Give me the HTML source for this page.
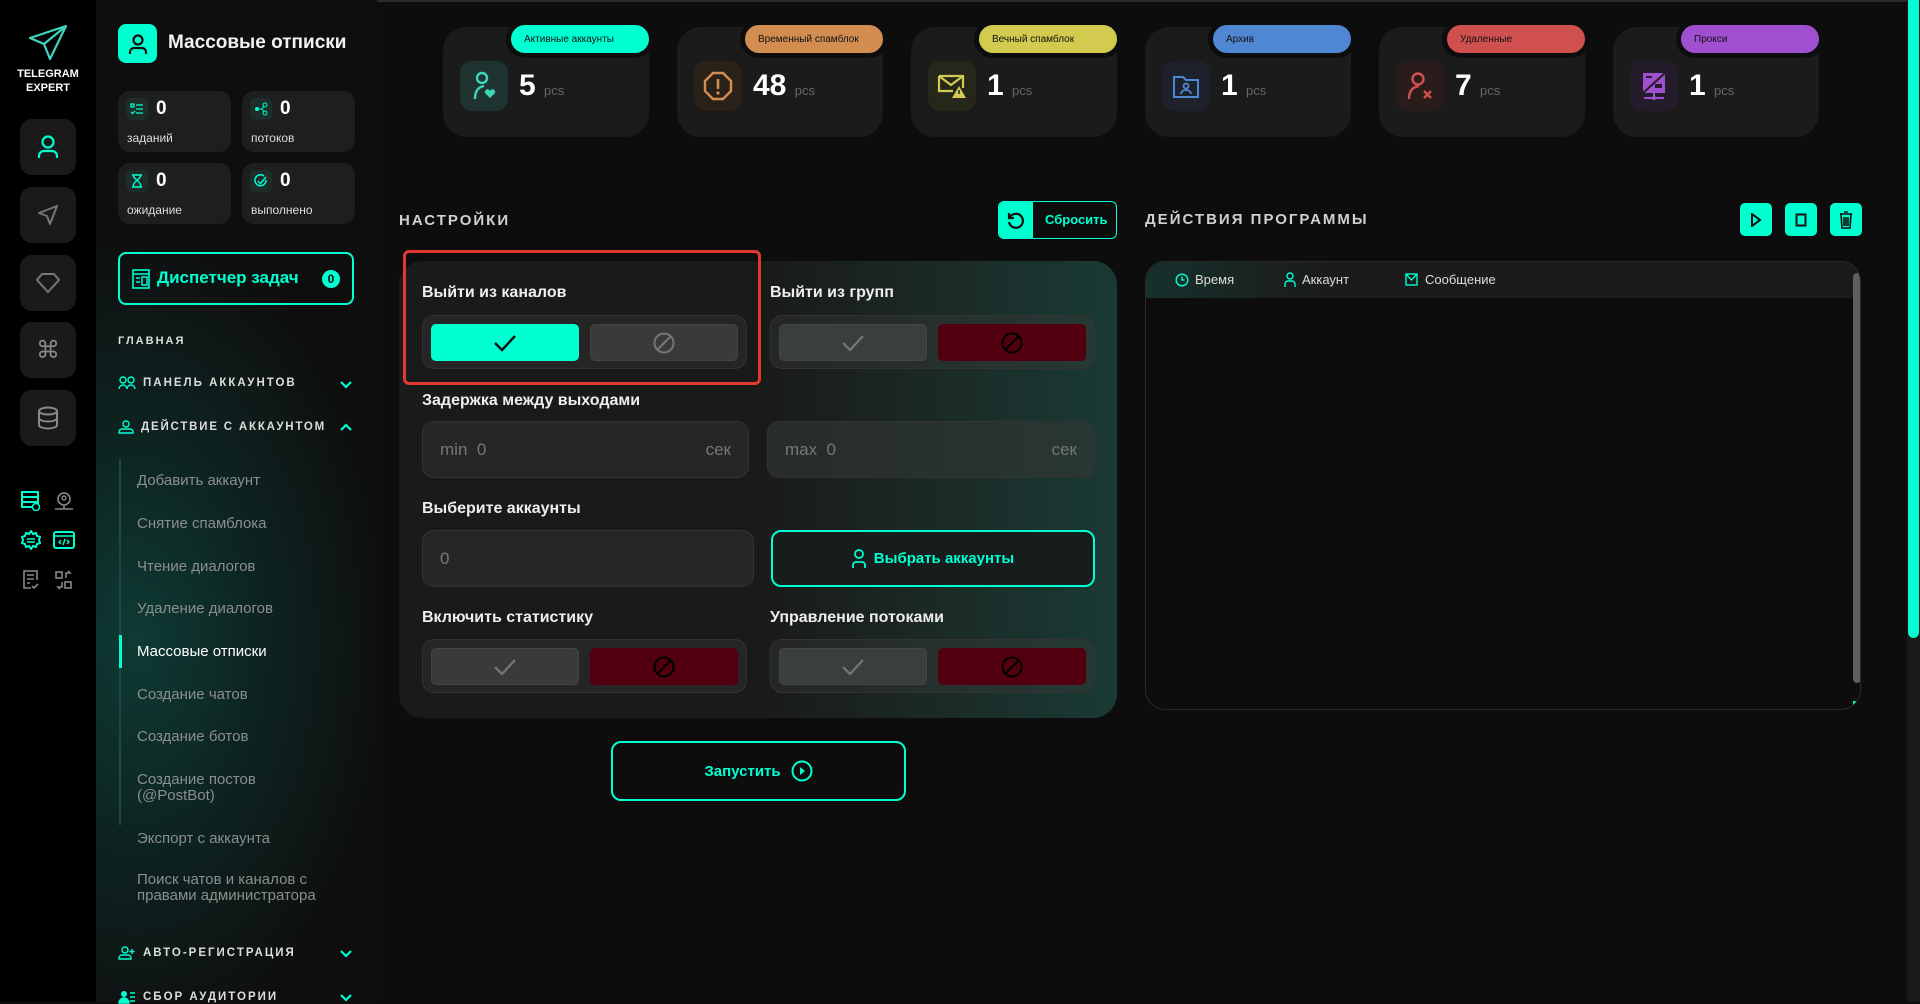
<!DOCTYPE html>
<html><head><meta charset="utf-8">
<style>
*{box-sizing:border-box;margin:0;padding:0}
body{width:1920px;height:1002px;overflow:hidden;background:#0d0d0d;font-family:"Liberation Sans",sans-serif;color:#fff;position:relative}
.abs{position:absolute}
.rail{left:0;top:0;width:96px;height:1002px;background:#000}
.rbtn{position:absolute;left:20px;width:56px;height:56px;border-radius:12px;background:#1a1a1a;display:flex;align-items:center;justify-content:center}
.side{left:96px;top:0;width:281px;height:1002px;background:radial-gradient(ellipse 260px 420px at 40px 640px,#0f3a34 0%,#0d2522 45%,#0e0e0e 100%)}
.sbox{position:absolute;width:113px;height:61px;border-radius:12px;background:#1d1f1f}
.sbox .ic{position:absolute;left:8px;top:7px;width:22px;height:22px;border-radius:5px;background:#1f2d2a;display:flex;align-items:center;justify-content:center}
.sbox .n{position:absolute;left:38px;top:7px;font-size:19px;font-weight:bold}
.sbox .l{position:absolute;left:9px;top:40px;font-size:12px;color:#ddd}
.sec{position:absolute;left:118px;font-size:11.5px;font-weight:bold;letter-spacing:2px;color:#ddd;display:flex;align-items:center;gap:7px}
.chev{position:absolute;left:340px;width:12px;height:12px}
.sub{position:absolute;left:137px;font-size:15px;color:#8a8f8e;line-height:16px}
.card{position:absolute;top:27px;width:206px;height:110px;border-radius:24px;background:#1b1b1b}
.badge{position:absolute;top:-7px;right:-5px;width:148px;height:38px;border-radius:19px;border:5px solid #0d0d0d;font-size:10px;color:#111;padding:9px 0 0 13px}
.card .ib{position:absolute;left:17px;top:34px;width:48px;height:50px;border-radius:12px;display:flex;align-items:center;justify-content:center}
.card .num{position:absolute;left:76px;top:42px;font-size:30px;font-weight:bold;font-family:"Liberation Sans Narrow","Liberation Sans",sans-serif}
.card .num span{font-size:13px;font-weight:normal;color:#666}
.h2{position:absolute;font-size:15px;font-weight:bold;letter-spacing:2px;color:#d0d0d0}
.lbl{position:absolute;font-size:16px;font-weight:bold;color:#eee}
.tg{position:absolute;width:325px;height:54px;border-radius:12px;background:rgba(60,60,60,.35);border:1px solid #333}
.tb{position:absolute;top:8px;width:148px;height:37px;border-radius:5px;display:flex;align-items:center;justify-content:center}
.inp{position:absolute;height:57px;border-radius:12px;background:#262626;border:1px solid #333;font-size:17px;color:#777}
.tbtn{position:absolute;top:203px;width:32px;height:33px;border-radius:5px;background:#00ffd1;display:flex;align-items:center;justify-content:center}
</style></head><body>

<div class="abs" style="left:96px;top:0;width:1824px;height:2px;background:#2a2a2a"></div>

<div class="abs rail">
  <svg class="abs" style="left:28px;top:24px" width="40" height="38" viewBox="0 0 40 38"><path d="M38 2 L2 14 L16 20 L22 35 Z M16 20 L38 2" fill="none" stroke="#3fd6c0" stroke-width="2.2" stroke-linejoin="round"/></svg>
  <div class="abs" style="left:0;top:67px;width:96px;text-align:center;font-size:11px;font-weight:bold;line-height:14px;color:#fff">TELEGRAM<br>EXPERT</div>
  <div class="rbtn" style="top:119px"><svg width="24" height="26" viewBox="0 0 24 26"><circle cx="12" cy="8" r="5.5" fill="none" stroke="#00ffd1" stroke-width="2.2"/><path d="M3 24v-2a5 5 0 0 1 5-5h8a5 5 0 0 1 5 5v2" fill="none" stroke="#00ffd1" stroke-width="2.2"/></svg></div>
  <div class="rbtn" style="top:187px"><svg width="24" height="24" viewBox="0 0 24 24"><path d="M21 3L3 10l8 3 3 8z" fill="none" stroke="#777" stroke-width="2" stroke-linejoin="round"/></svg></div>
  <div class="rbtn" style="top:255px"><svg width="26" height="22" viewBox="0 0 26 22"><path d="M7 2h12l5 6-11 12L2 8z" fill="none" stroke="#777" stroke-width="2" stroke-linejoin="round"/></svg></div>
  <div class="rbtn" style="top:322px;font-size:24px;color:#888">⌘</div>
  <div class="rbtn" style="top:390px"><svg width="22" height="24" viewBox="0 0 22 24"><ellipse cx="11" cy="5" rx="9" ry="3.5" fill="none" stroke="#888" stroke-width="2"/><path d="M2 5v14c0 2 4 3.5 9 3.5s9-1.5 9-3.5V5M2 12c0 2 4 3.5 9 3.5s9-1.5 9-3.5" fill="none" stroke="#888" stroke-width="2"/></svg></div>
  <svg class="abs" style="left:21px;top:491px" width="20" height="20" viewBox="0 0 20 20"><rect x="1" y="1" width="16" height="15" fill="none" stroke="#00ffd1" stroke-width="2"/><path d="M1 6h16M1 11h16" stroke="#00ffd1" stroke-width="2"/><circle cx="15" cy="16" r="3.5" fill="#000" stroke="#00ffd1" stroke-width="1.5"/></svg>
  <svg class="abs" style="left:54px;top:491px" width="20" height="20" viewBox="0 0 20 20"><circle cx="10" cy="8" r="6" fill="none" stroke="#888" stroke-width="1.6"/><circle cx="10" cy="7" r="2" fill="none" stroke="#888" stroke-width="1.4"/><path d="M1 18h18M10 14v4" stroke="#888" stroke-width="1.6"/></svg>
  <svg class="abs" style="left:21px;top:530px" width="20" height="20" viewBox="0 0 20 20"><path d="M10 1l2 3 3-1 1 3 3 1-1 3 1 3-3 1-1 3-3-1-2 3-2-3-3 1-1-3-3-1 1-3-1-3 3-1 1-3 3 1z" fill="none" stroke="#00ffd1" stroke-width="2"/><path d="M6 9h8M6 12h8" stroke="#00ffd1" stroke-width="1.6"/></svg>
  <svg class="abs" style="left:53px;top:531px" width="22" height="18" viewBox="0 0 22 18"><rect x="1" y="1" width="20" height="16" rx="2" fill="none" stroke="#00ffd1" stroke-width="2"/><path d="M1 5h20M8 9l-2 2 2 2M14 9l2 2-2 2M12 8l-2 6" stroke="#00ffd1" stroke-width="1.4" fill="none"/></svg>
  <svg class="abs" style="left:22px;top:570px" width="18" height="20" viewBox="0 0 18 20"><path d="M15 10V1H2v17h7M5 5h7M5 9h7M5 13h3M10 16l2 2 4-4" fill="none" stroke="#888" stroke-width="1.6"/></svg>
  <svg class="abs" style="left:55px;top:570px" width="18" height="20" viewBox="0 0 18 20"><rect x="1" y="2" width="6" height="6" fill="none" stroke="#888" stroke-width="1.6"/><rect x="10" y="12" width="6" height="6" fill="none" stroke="#888" stroke-width="1.6"/><path d="M11 8V3h4l-2-2M7 12v5H3l2 2" fill="none" stroke="#888" stroke-width="1.6"/></svg>
</div>

<div class="abs side"></div>
<div class="abs" style="left:118px;top:24px;width:39px;height:39px;border-radius:8px;background:#00ffd1;display:flex;align-items:center;justify-content:center"><svg width="20" height="22" viewBox="0 0 20 22"><circle cx="10" cy="7" r="4.5" fill="none" stroke="#111" stroke-width="2.2"/><path d="M2 21v-2a4 4 0 0 1 4-4h8a4 4 0 0 1 4 4v2" fill="none" stroke="#111" stroke-width="2.2"/></svg></div>
<div class="abs" style="left:168px;top:32px;font-size:19px;font-weight:bold;color:#f2f2f2">Массовые отписки</div>

<div class="sbox" style="left:118px;top:91px"><div class="ic"><svg width="14" height="12" viewBox="0 0 14 12"><path d="M1 1h3v3H1zM6 2h7M6 6h7M6 10h7M1 9l1.5 1.5L5 8" fill="none" stroke="#00ffd1" stroke-width="1.3"/></svg></div><div class="n">0</div><div class="l">заданий</div></div>
<div class="sbox" style="left:242px;top:91px"><div class="ic"><svg width="14" height="14" viewBox="0 0 14 14"><circle cx="3" cy="7" r="2" fill="#00ffd1"/><circle cx="11" cy="3" r="2" fill="none" stroke="#00ffd1"/><circle cx="11" cy="11" r="2" fill="none" stroke="#00ffd1"/><path d="M5 7h3l2-3M8 7l2 3" stroke="#00ffd1" fill="none"/></svg></div><div class="n">0</div><div class="l">потоков</div></div>
<div class="sbox" style="left:118px;top:163px"><div class="ic"><svg width="12" height="14" viewBox="0 0 12 14"><path d="M1 1h10M1 13h10M2 1c0 4 8 6 8 12M10 1c0 4-8 6-8 12" fill="none" stroke="#00ffd1" stroke-width="1.4"/></svg></div><div class="n">0</div><div class="l">ожидание</div></div>
<div class="sbox" style="left:242px;top:163px"><div class="ic"><svg width="14" height="14" viewBox="0 0 14 14"><path d="M12 6a5.5 5.5 0 1 1-2-4" fill="none" stroke="#00ffd1" stroke-width="1.5"/><path d="M4 7l2.5 2.5L12 3" fill="none" stroke="#00ffd1" stroke-width="1.5"/></svg></div><div class="n">0</div><div class="l">выполнено</div></div>

<div class="abs" style="left:118px;top:252px;width:236px;height:53px;border:2px solid #00ffd1;border-radius:8px"></div>
<svg class="abs" style="left:132px;top:269px" width="18" height="20" viewBox="0 0 18 20"><rect x="1" y="1" width="16" height="18" fill="none" stroke="#00ffd1" stroke-width="1.6"/><path d="M1 5h16M4 9h4M4 13h4M10 8h5v8h-5z" stroke="#00ffd1" stroke-width="1.4" fill="none"/></svg>
<div class="abs" style="left:157px;top:268px;font-size:17px;font-weight:bold;color:#00ffd1">Диспетчер задач</div>
<div class="abs" style="left:322px;top:270px;width:18px;height:18px;border-radius:9px;background:#00ffd1;color:#111;font-size:12px;font-weight:bold;text-align:center;line-height:18px">0</div>

<div class="sec" style="top:335px;font-size:11px">ГЛАВНАЯ</div>
<div class="sec" style="top:376px"><svg width="18" height="14" viewBox="0 0 18 14"><circle cx="5" cy="4" r="3" fill="none" stroke="#00ffd1" stroke-width="1.4"/><circle cx="13" cy="4" r="3" fill="none" stroke="#00ffd1" stroke-width="1.4"/><path d="M1 13a4 4 0 0 1 8 0M9 13a4 4 0 0 1 8 0" fill="none" stroke="#00ffd1" stroke-width="1.4"/></svg>ПАНЕЛЬ АККАУНТОВ</div>
<svg class="chev" style="top:378px" viewBox="0 0 12 12"><path d="M1 4l5 5 5-5" fill="none" stroke="#00ffd1" stroke-width="2.2"/></svg>
<div class="sec" style="top:420px;letter-spacing:1.8px"><svg width="16" height="14" viewBox="0 0 16 14"><circle cx="8" cy="4" r="3" fill="none" stroke="#00ffd1" stroke-width="1.4"/><path d="M1 13v-1a3 3 0 0 1 3-3h8a3 3 0 0 1 3 3v1z" fill="none" stroke="#00ffd1" stroke-width="1.4"/></svg>ДЕЙСТВИЕ С АККАУНТОМ</div>
<svg class="chev" style="top:421px" viewBox="0 0 12 12"><path d="M1 9l5-5 5 5" fill="none" stroke="#00ffd1" stroke-width="2.2"/></svg>

<div class="abs" style="left:119px;top:459px;width:2px;height:366px;background:#1d4a43"></div>
<div class="abs" style="left:119px;top:635px;width:3px;height:33px;background:#00ffd1"></div>
<div class="sub" style="top:473px">Добавить аккаунт</div>
<div class="sub" style="top:516px">Снятие спамблока</div>
<div class="sub" style="top:559px">Чтение диалогов</div>
<div class="sub" style="top:601px">Удаление диалогов</div>
<div class="sub" style="top:644px;color:#fff">Массовые отписки</div>
<div class="sub" style="top:687px">Создание чатов</div>
<div class="sub" style="top:729px">Создание ботов</div>
<div class="sub" style="top:772px">Создание постов<br>(@PostBot)</div>
<div class="sub" style="top:831px">Экспорт с аккаунта</div>
<div class="sub" style="top:872px">Поиск чатов и каналов с<br>правами администратора</div>

<div class="sec" style="top:946px"><svg width="18" height="14" viewBox="0 0 18 14"><circle cx="7" cy="4" r="3" fill="none" stroke="#00ffd1" stroke-width="1.4"/><path d="M1 13v-1a3 3 0 0 1 3-3h6a3 3 0 0 1 3 3v1zM14 3v5M11.5 5.5h5" fill="none" stroke="#00ffd1" stroke-width="1.4"/></svg>АВТО-РЕГИСТРАЦИЯ</div>
<svg class="chev" style="top:947px" viewBox="0 0 12 12"><path d="M1 4l5 5 5-5" fill="none" stroke="#00ffd1" stroke-width="2.2"/></svg>
<div class="sec" style="top:990px"><svg width="18" height="14" viewBox="0 0 18 14"><circle cx="6" cy="4" r="3" fill="#00ffd1"/><path d="M1 13a5 5 0 0 1 10 0zM12 3h5M12 7h5M12 11h5" stroke="#00ffd1" fill="#00ffd1" stroke-width="1.4"/></svg>СБОР АУДИТОРИИ</div>
<svg class="chev" style="top:991px" viewBox="0 0 12 12"><path d="M1 4l5 5 5-5" fill="none" stroke="#00ffd1" stroke-width="2.2"/></svg>

<div class="card" style="left:443px"><div class="badge" style="background:#00ffd1">Активные аккаунты</div>
 <div class="ib" style="background:#1f3330"><svg width="24" height="30" viewBox="0 0 24 30"><circle cx="10" cy="7" r="5" fill="none" stroke="#3fd6b8" stroke-width="2.4"/><path d="M3 28c0-8 3-12 9-13" fill="none" stroke="#3fd6b8" stroke-width="2.4"/><path d="M18 27l-5-5a2.5 2.5 0 0 1 5-2 2.5 2.5 0 0 1 5 2z" fill="#3fd6b8"/></svg></div>
 <div class="num">5 <span>pcs</span></div></div>
<div class="card" style="left:677px"><div class="badge" style="background:#d38d50">Временный спамблок</div>
 <div class="ib" style="background:#2a2218"><svg width="30" height="30" viewBox="0 0 30 30"><path d="M10 2h10l8 8v10l-8 8H10l-8-8V10z" fill="none" stroke="#d38d50" stroke-width="2.4"/><path d="M15 8v10" stroke="#d38d50" stroke-width="2.6"/><circle cx="15" cy="22" r="1.6" fill="#d38d50"/></svg></div>
 <div class="num">48 <span>pcs</span></div></div>
<div class="card" style="left:911px"><div class="badge" style="background:#d2cb4f">Вечный спамблок</div>
 <div class="ib" style="background:#26261a"><svg width="30" height="26" viewBox="0 0 30 26"><path d="M2 3h24v12M2 3v15h14M2 3l12 9 12-9" fill="none" stroke="#d2cb4f" stroke-width="2.2"/><path d="M22 13l7 12H15z" fill="#d2cb4f"/><path d="M22 17v4" stroke="#222" stroke-width="1.5"/></svg></div>
 <div class="num">1 <span>pcs</span></div></div>
<div class="card" style="left:1145px"><div class="badge" style="background:#5087d3">Архив</div>
 <div class="ib" style="background:#1c212b"><svg width="28" height="26" viewBox="0 0 28 26"><path d="M2 4h9l3 3h12v17H2z" fill="none" stroke="#5087d3" stroke-width="2"/><circle cx="14" cy="13" r="2.5" fill="none" stroke="#5087d3" stroke-width="1.8"/><path d="M9 21a5 4 0 0 1 10 0" fill="none" stroke="#5087d3" stroke-width="1.8"/></svg></div>
 <div class="num">1 <span>pcs</span></div></div>
<div class="card" style="left:1379px"><div class="badge" style="background:#d05050">Удаленные</div>
 <div class="ib" style="background:#2b1c1c"><svg width="28" height="30" viewBox="0 0 28 30"><circle cx="12" cy="8" r="5.5" fill="none" stroke="#d05050" stroke-width="2.4"/><path d="M3 28c0-7 3-12 10-13" fill="none" stroke="#d05050" stroke-width="2.4"/><path d="M18 20l7 7M25 20l-7 7" stroke="#d05050" stroke-width="2.4"/></svg></div>
 <div class="num">7 <span>pcs</span></div></div>
<div class="card" style="left:1613px"><div class="badge" style="background:#9f4fd0">Прокси</div>
 <div class="ib" style="background:#251c2b"><svg width="26" height="30" viewBox="0 0 26 30"><rect x="2" y="2" width="22" height="20" fill="#9f4fd0"/><path d="M24 2L2 22" stroke="#251c2b" stroke-width="2"/><rect x="5" y="5" width="6" height="2" fill="#251c2b"/><rect x="14" y="13" width="7" height="4" fill="#251c2b"/><path d="M13 22v5M3 27h20" stroke="#9f4fd0" stroke-width="2"/><circle cx="13" cy="27" r="2" fill="#9f4fd0"/></svg></div>
 <div class="num">1 <span>pcs</span></div></div>

<div class="h2" style="left:399px;top:212px">НАСТРОЙКИ</div>
<div class="abs" style="left:998px;top:201px;width:119px;height:38px;border:1.5px solid #00ffd1;border-radius:6px;overflow:hidden">
  <div class="abs" style="left:0;top:0;width:34px;height:38px;background:#00ffd1;display:flex;align-items:center;justify-content:center"><svg width="20" height="20" viewBox="0 0 20 20"><path d="M4 6a7 7 0 1 1-1 5" fill="none" stroke="#111" stroke-width="2.2"/><path d="M3 2v5h5" fill="none" stroke="#111" stroke-width="2.2"/></svg></div>
  <div class="abs" style="left:46px;top:10px;font-size:13px;font-weight:bold;color:#00ffd1">Сбросить</div>
</div>
<div class="abs" style="left:399px;top:261px;width:718px;height:457px;border-radius:24px;background:linear-gradient(90deg,#1a1a1a 0%,#1a1a1a 50%,#1b2a27 75%,#1a3a33 100%)"></div>
<div class="abs" style="left:403px;top:250px;width:358px;height:135px;border:3px solid #e03a30;border-radius:6px"></div>

<div class="lbl" style="left:422px;top:284px">Выйти из каналов</div>
<div class="lbl" style="left:770px;top:284px">Выйти из групп</div>
<div class="tg" style="left:422px;top:315px">
  <div class="tb" style="left:8px;background:#00ffd1"><svg width="24" height="18" viewBox="0 0 24 18"><path d="M2 9l7 7L22 2" fill="none" stroke="#111" stroke-width="2.4"/></svg></div>
  <div class="tb" style="left:167px;background:#3a3a3a;border:1px solid #444"><svg width="24" height="24" viewBox="0 0 24 24"><circle cx="12" cy="12" r="9.5" fill="none" stroke="#777" stroke-width="2"/><path d="M6 18L18 6" stroke="#777" stroke-width="2"/></svg></div>
</div>
<div class="tg" style="left:770px;top:315px">
  <div class="tb" style="left:8px;background:#393f3d;border:1px solid #454545"><svg width="24" height="18" viewBox="0 0 24 18"><path d="M2 9l7 7L22 2" fill="none" stroke="#777" stroke-width="2.2"/></svg></div>
  <div class="tb" style="left:167px;background:#520010"><svg width="24" height="24" viewBox="0 0 24 24"><circle cx="12" cy="12" r="9.5" fill="none" stroke="#000" stroke-width="2"/><path d="M6 18L18 6" stroke="#000" stroke-width="2"/></svg></div>
</div>

<div class="lbl" style="left:422px;top:392px">Задержка между выходами</div>
<div class="inp" style="left:422px;top:421px;width:327px"><span class="abs" style="left:17px;top:18px">min&nbsp;&nbsp;0</span><span class="abs" style="right:17px;top:18px">сек</span></div>
<div class="inp" style="left:767px;top:421px;width:328px;background:rgba(50,55,54,.6)"><span class="abs" style="left:17px;top:18px">max&nbsp;&nbsp;0</span><span class="abs" style="right:17px;top:18px">сек</span></div>

<div class="lbl" style="left:422px;top:500px">Выберите аккаунты</div>
<div class="inp" style="left:422px;top:530px;width:332px"><span class="abs" style="left:17px;top:18px">0</span></div>
<div class="abs" style="left:771px;top:530px;width:324px;height:57px;border:2px solid #00ffd1;border-radius:10px;background:#161d1c;display:flex;align-items:center;justify-content:center;gap:8px;font-size:15px;font-weight:bold;color:#00ffd1"><svg width="14" height="20" viewBox="0 0 14 20"><circle cx="7" cy="5" r="4" fill="none" stroke="#00ffd1" stroke-width="1.8"/><path d="M1 19v-3a3 3 0 0 1 3-3h6a3 3 0 0 1 3 3v3" fill="none" stroke="#00ffd1" stroke-width="1.8"/></svg>Выбрать аккаунты</div>

<div class="lbl" style="left:422px;top:609px">Включить статистику</div>
<div class="lbl" style="left:770px;top:609px">Управление потоками</div>
<div class="tg" style="left:422px;top:639px">
  <div class="tb" style="left:8px;background:#3a3a3a;border:1px solid #454545"><svg width="24" height="18" viewBox="0 0 24 18"><path d="M2 9l7 7L22 2" fill="none" stroke="#777" stroke-width="2.2"/></svg></div>
  <div class="tb" style="left:167px;background:#520010"><svg width="24" height="24" viewBox="0 0 24 24"><circle cx="12" cy="12" r="9.5" fill="none" stroke="#000" stroke-width="2"/><path d="M6 18L18 6" stroke="#000" stroke-width="2"/></svg></div>
</div>
<div class="tg" style="left:770px;top:639px">
  <div class="tb" style="left:8px;background:#393f3d;border:1px solid #454545"><svg width="24" height="18" viewBox="0 0 24 18"><path d="M2 9l7 7L22 2" fill="none" stroke="#777" stroke-width="2.2"/></svg></div>
  <div class="tb" style="left:167px;background:#520010"><svg width="24" height="24" viewBox="0 0 24 24"><circle cx="12" cy="12" r="9.5" fill="none" stroke="#000" stroke-width="2"/><path d="M6 18L18 6" stroke="#000" stroke-width="2"/></svg></div>
</div>

<div class="abs" style="left:611px;top:741px;width:295px;height:60px;border:2px solid #00ffd1;border-radius:10px;display:flex;align-items:center;justify-content:center;gap:10px;font-size:15px;font-weight:bold;color:#00ffd1">Запустить<svg width="22" height="22" viewBox="0 0 22 22"><circle cx="11" cy="11" r="9.5" fill="none" stroke="#00ffd1" stroke-width="2"/><path d="M9 7l5 4-5 4z" fill="#00ffd1"/></svg></div>

<div class="h2" style="left:1145px;top:211px">ДЕЙСТВИЯ ПРОГРАММЫ</div>
<div class="tbtn" style="left:1740px"><svg width="12" height="14" viewBox="0 0 12 14"><path d="M2 1l8 6-8 6z" fill="none" stroke="#111" stroke-width="2"/></svg></div>
<div class="tbtn" style="left:1785px"><svg width="12" height="14" viewBox="0 0 12 14"><rect x="1.5" y="1.5" width="9" height="11" fill="none" stroke="#111" stroke-width="2"/></svg></div>
<div class="tbtn" style="left:1830px"><svg width="14" height="18" viewBox="0 0 14 18"><path d="M1 3h12M5 1h4M2 3l1 14h8l1-14M5 6v9M7 6v9M9 6v9" fill="none" stroke="#111" stroke-width="1.6"/></svg></div>

<div class="abs" style="left:1145px;top:261px;width:716px;height:449px;border:1px solid #2a2a2a;border-radius:20px;background:#0d0d0d;overflow:hidden">
  <div class="abs" style="left:0;top:0;width:716px;height:36px;background:linear-gradient(90deg,#17302c 0%,#1b1b1b 25%,#1b1b1b 100%)"></div>
  <svg class="abs" style="left:29px;top:11px" width="14" height="14" viewBox="0 0 14 14"><circle cx="7" cy="7" r="5.8" fill="none" stroke="#00ffd1" stroke-width="1.4"/><path d="M7 3.5V7h2.5" fill="none" stroke="#00ffd1" stroke-width="1.4"/></svg>
  <div class="abs" style="left:49px;top:10px;font-size:13px;color:#ddd">Время</div>
  <svg class="abs" style="left:138px;top:10px" width="12" height="16" viewBox="0 0 12 16"><circle cx="6" cy="4" r="3" fill="none" stroke="#00ffd1" stroke-width="1.4"/><path d="M1 15v-3a3 3 0 0 1 3-3h4a3 3 0 0 1 3 3v3" fill="none" stroke="#00ffd1" stroke-width="1.4"/></svg>
  <div class="abs" style="left:156px;top:10px;font-size:13px;color:#ddd">Аккаунт</div>
  <svg class="abs" style="left:259px;top:11px" width="13" height="13" viewBox="0 0 13 13"><rect x="1" y="1" width="11" height="11" fill="none" stroke="#00ffd1" stroke-width="1.4"/><path d="M1 1l5.5 6L12 1" fill="none" stroke="#00ffd1" stroke-width="1.4"/></svg>
  <div class="abs" style="left:279px;top:10px;font-size:13px;color:#ddd">Сообщение</div>
  <div class="abs" style="left:707px;top:11px;width:8px;height:410px;border-radius:4px;background:#5f5f5f"></div>
  <div class="abs" style="left:707px;top:439px;width:8px;height:8px;background:#00ffd1"></div>
</div>

<div class="abs" style="left:1907px;top:0;width:13px;height:1002px;background:#1a1a1a"></div>
<div class="abs" style="left:1908px;top:0;width:11px;height:638px;border-radius:0 0 6px 6px;background:#00ffd1"></div>
</body></html>
